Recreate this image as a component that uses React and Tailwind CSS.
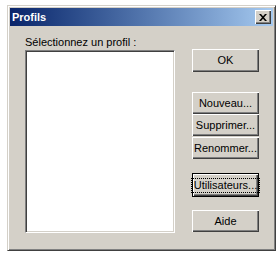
import React from "react";

const font = { fontFamily: '"Liberation Sans", Arial, sans-serif' };

const Button = ({ label, focused, tall }) => {
  if (focused) {
    return (
      <div className="w-[67px] h-[24px] border border-black">
        <div className="w-full h-full bg-[#d4d0c8] flex items-center justify-center shadow-[inset_1px_1px_#ffffff,inset_-1px_-1px_#404040,inset_-2px_-2px_#808080]">
          <div className="px-[2px] border border-dotted border-black text-[11px] leading-[13px] text-black">
            {label}
          </div>
        </div>
      </div>
    );
  }
  return (
    <div
      className={
        "w-[67px] bg-[#d4d0c8] flex items-center justify-center text-[11px] leading-[13px] text-black shadow-[inset_1px_1px_#ffffff,inset_-1px_-1px_#404040,inset_-2px_-2px_#808080] " +
        (tall ? "h-[23px]" : "h-[22px]")
      }
    >
      {label}
    </div>
  );
};

export default function App() {
  return (
    <div className="w-[279px] h-[253px] bg-white overflow-hidden" style={font}>
      <div className="ml-[7px] mt-[5px] w-[269px] h-[246px] bg-[#d4d0c8] border border-t-[#d4d0c8] border-l-[#d4d0c8] border-r-[#404040] border-b-[#404040] shadow-[inset_1px_1px_#ffffff,inset_-1px_-1px_#808080] p-[2px]">
        {/* title bar */}
        <div className="h-[18px] flex items-center justify-between bg-gradient-to-r from-[#0a246a] to-[#a6caf0] pl-[2px] pr-[2px]">
          <span className="text-white font-bold text-[11px] leading-[13px]">Profils</span>
          <div className="w-[16px] h-[14px] bg-[#d4d0c8] flex items-center justify-center shadow-[inset_1px_1px_#ffffff,inset_-1px_-1px_#404040,inset_-2px_-2px_#808080]">
            <svg width="8" height="7" viewBox="0 0 8 7">
              <path d="M0 0h2l2 2.2L6 0h2L5 3.5 8 7H6L4 4.8 2 7H0l3-3.5z" fill="#000" />
            </svg>
          </div>
        </div>

        {/* content */}
        <div className="flex items-start pl-[15px]">
          <div className="flex flex-col pt-[10px]">
            <div className="text-[11px] leading-[13px] text-black mb-[1px]">Sélectionnez un profil :</div>
            <div className="w-[150px] h-[183px] bg-white border border-t-[#808080] border-l-[#808080] border-b-white border-r-white shadow-[inset_1px_1px_#404040,inset_-1px_-1px_#d4d0c8]" />
          </div>
          <div className="flex flex-col ml-[17px] pt-[23px]">
            <Button label="OK" tall />
            <div className="mt-[20px]">
              <Button label="Nouveau..." />
            </div>
            <Button label="Supprimer..." />
            <div className="mt-[1px]">
              <Button label="Renommer..." />
            </div>
            <div className="mt-[14px]">
              <Button label="Utilisateurs..." focused />
            </div>
            <div className="mt-[13px]">
              <Button label="Aide" />
            </div>
          </div>
        </div>
      </div>
    </div>
  );
}
